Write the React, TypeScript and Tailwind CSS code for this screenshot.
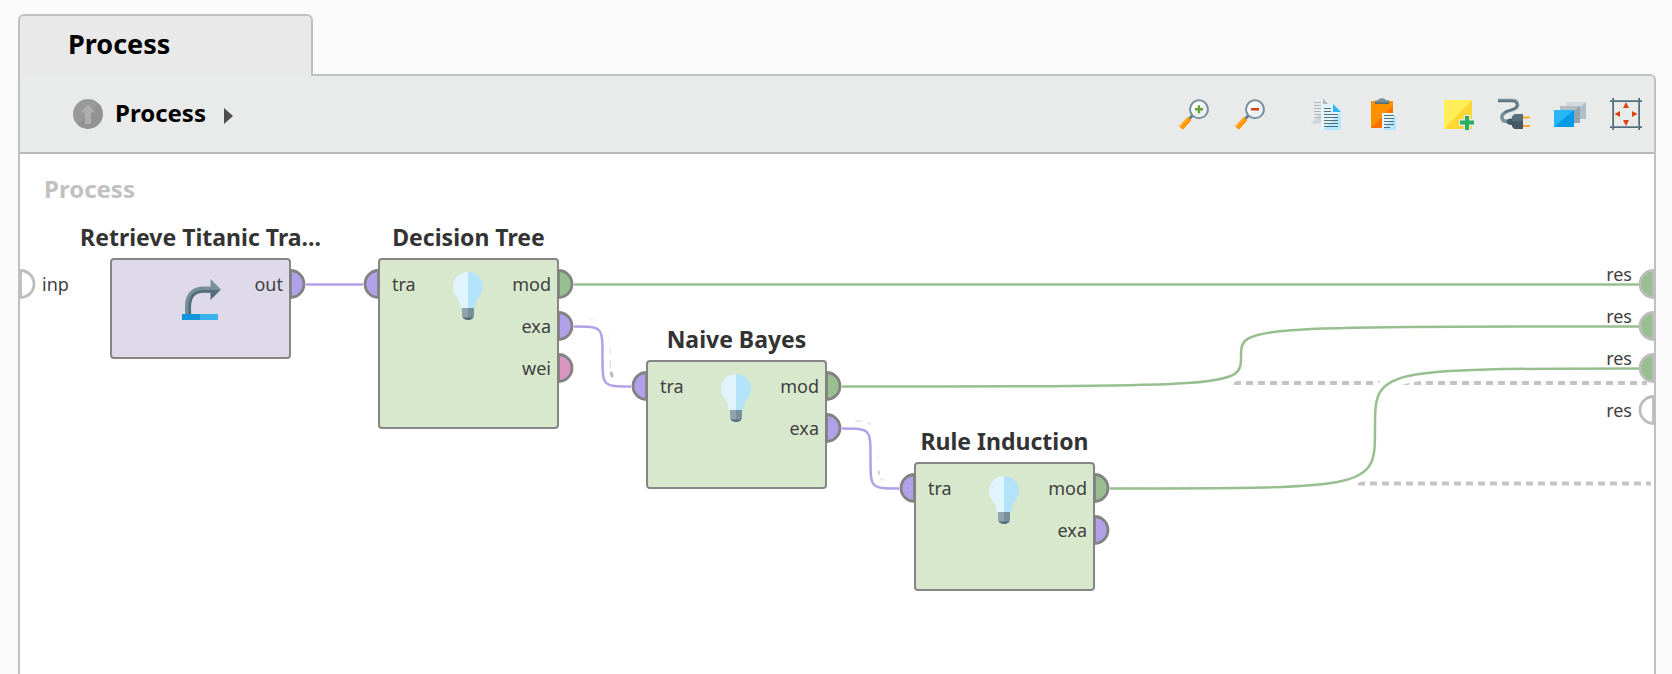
import { useLayoutEffect, useRef, useState, type ReactNode } from "react";

type PortKind = "data" | "model" | "weights" | "empty";

const PORT_FILL: Record<PortKind, string> = {
  data: "#b1a1e9",
  model: "#98bf8f",
  weights: "#d996c0",
  empty: "#ffffff",
};

type Port = { label: string; kind: PortKind };

type Operator = {
  name: string;
  place: string;
  tone: string;
  icon: ReactNode;
  inputs: Port[];
  outputs: Port[];
};

function HalfPort({ kind, side, stroke = "#828282" }: { kind: PortKind; side: "left" | "right"; stroke?: string }) {
  const d = side === "right" ? "M1.5 1.5 A13.5 13.5 0 0 1 1.5 28.5 Z" : "M15.5 1.5 A13.5 13.5 0 0 0 15.5 28.5 Z";
  return (
    <svg width="17" height="30" viewBox="0 0 17 30" className="block shrink-0" aria-hidden="true">
      <path d={d} fill={PORT_FILL[kind]} stroke={stroke} strokeWidth="2.8" />
    </svg>
  );
}

function Bulb() {
  return (
    <svg width="30" height="48" viewBox="0 0 30 48" aria-hidden="true">
      <path d="M15 0C6.500 0 0 6.500 0 15C0 24 7.500 25 7.500 36H15Z" fill="#e1f3fd" />
      <path d="M15 0C23.500 0 30 6.500 30 15C30 24 22.500 25 22.500 36H15Z" fill="#b3e3f8" />
      <path d="M9 36H15V48C12 48 9 46 9 43.500Z" fill="#90a4ae" />
      <path d="M15 36H21V43.500C21 46 18 48 15 48Z" fill="#78909c" />
      <path d="M9.500 45.500H20.500C19.500 47 17 48 15 48S10.500 47 9.500 45.500Z" fill="#546e7a" />
    </svg>
  );
}

function RetrieveIcon() {
  return (
    <svg width="40" height="48" viewBox="-2 -7 40 48" className="overflow-visible" aria-hidden="true">
      <path d="M6 35V27C6 16 12 10.500 22 10.500H30" fill="none" stroke="#78909c" strokeWidth="6" />
      <path d="M7.700 35V27C7.700 17 13 12.300 22 12.300H30" fill="none" stroke="#546e7a" strokeWidth="2.800" />
      <path d="M28.500 0L39 10.500H28.500Z" fill="#78909c" />
      <path d="M28.500 21L39 10.500H28.500Z" fill="#546e7a" />
      <path d="M0 35H18V41H0Z" fill="#1296db" />
      <path d="M18 35H36V41H18Z" fill="#38b3ee" />
    </svg>
  );
}

function Glyph({ children }: { children: ReactNode }) {
  return (
    <svg width="32" height="32" viewBox="0 0 32 32" className="block" aria-hidden="true">
      {children}
    </svg>
  );
}

function Lens() {
  return (
    <>
      <path d="M15.500 16.500L11 21" stroke="#607d8b" strokeWidth="3" />
      <path d="M11.500 20.500L3 30" stroke="#ff9800" strokeWidth="5" />
      <path d="M10.500 19L1.700 28.600" stroke="#ffb74d" strokeWidth="1.500" />
      <circle cx="21" cy="11.300" r="9" fill="#fff" />
      <path d="M27.400 5A9 9 0 0 1 14.600 17.700Z" fill="#eceff1" />
      <circle cx="21" cy="11.300" r="9" fill="none" stroke="#78909c" strokeWidth="2" />
    </>
  );
}

function ZoomInIcon() {
  return (
    <Glyph>
      <Lens />
      <path d="M17 11.300H25M21 7.300V15.300" stroke="#689f38" strokeWidth="2.400" />
    </Glyph>
  );
}

function ZoomOutIcon() {
  return (
    <Glyph>
      <Lens />
      <path d="M17 11.300H25" stroke="#d84315" strokeWidth="2.400" />
    </Glyph>
  );
}

function CopyIcon() {
  return (
    <Glyph>
      <path d="M1 .500H13L18 6V25.500H1Z" fill="#e8eaec" />
      <path d="M1 25.500L18 8V25.500Z" fill="#cfd5d9" />
      <path d="M13 .500L18 6H13Z" fill="#b0b8bb" />
      <path d="M4 4.500H11M4 7.500H11M4 10.500H11M4 13.500H11M4 16.500H11M4 19.500H11" stroke="#b0b8bb" />
      <path d="M11 6H23L31 14V32H11Z" fill="#e1f5fe" />
      <path d="M31 14V32H13Z" fill="#b3e5fc" />
      <path d="M23 6L31 14H23Z" fill="#29b6f6" />
      <path d="M14 10.500H21M14 13.500H21M14 16.500H28M14 19.500H28M14 22.500H28M14 25.500H28M14 28.500H28" stroke="#546e7a" strokeWidth="1.200" />
    </Glyph>
  );
}

function PasteIcon() {
  return (
    <Glyph>
      <path d="M5 3H27V30H5Z" fill="#ff9100" />
      <path d="M27 8V30H5Z" fill="#ff6f00" />
      <path d="M9 2.200H12C13 .600 14.500 .200 16 .200S19 .600 20 2.200H23V6H9Z" fill="#78909c" />
      <path d="M9 4.200H23V6H9Z" fill="#546e7a" />
      <path d="M16 15H30V32H16Z" fill="#e1f5fe" />
      <path d="M30 17V32H16.500Z" fill="#b3e5fc" />
      <path d="M18 17.500H28M18 20.500H28M18 23.500H28M18 26.500H28M18 29.500H24" stroke="#546e7a" strokeWidth="1.200" />
    </Glyph>
  );
}

function NoteIcon() {
  return (
    <Glyph>
      <path d="M2 2H30V31H2Z" fill="#ffee58" />
      <path d="M30 2V31H2Z" fill="#fdd835" />
      <path d="M25 17V32M17 24.500H32" stroke="#e8ebea" strokeWidth="6.500" />
      <path d="M25 18V32M18 24.500H32" stroke="#27ae60" strokeWidth="4" />
    </Glyph>
  );
}

function PlugIcon() {
  return (
    <Glyph>
      <path d="M0 2.500H14C19.500 2.500 20.500 6.500 19 9C17 12.500 10 12 6.500 14.800C1.500 18.500 4 24 10 23.500" fill="none" stroke="#78909c" strokeWidth="3.400" />
      <path d="M0 3.300H14C18.600 3.300 19.500 6.500 18.200 8.700C16 12 9.500 11.700 6.500 14.800" fill="none" stroke="#546e7a" strokeWidth="1.600" />
      <path d="M9 21.500L12 20.500H15V27H12L9 25.500Z" fill="#455a64" />
      <path d="M16.500 16H25V31H16.500L14 28.500V18.500Z" fill="#546e7a" />
      <path d="M14 23.500H25V31H16.500L14 28.500Z" fill="#455a64" />
      <path d="M25 19.500H32M25 28H32" stroke="#ffa726" strokeWidth="2.200" />
    </Glyph>
  );
}

function LayersIcon() {
  return (
    <Glyph>
      <path d="M12 4H32V21H12Z" fill="#cfd8dc" />
      <path d="M32 4V21H12Z" fill="#b0bec5" />
      <path d="M6 8H26V25H6Z" fill="#b0bec5" />
      <path d="M26 8V25H6Z" fill="#90a4ae" />
      <path d="M0 12H20V29H0Z" fill="#29b6f6" />
      <path d="M20 12V29H0Z" fill="#039be5" />
    </Glyph>
  );
}

function FitIcon() {
  return (
    <Glyph>
      <path d="M3 0V32M29 0V32M0 3H32M0 29H32" stroke="#78909c" strokeWidth="2" />
      <path d="M3.500 0V32M29.500 0V32M0 3.500H32M0 29.500H32" stroke="#546e7a" />
      <path d="M16 4L19 10H13ZM16 28L19 22H13ZM4.500 16L10 13V19ZM27.500 16L22 13V19Z" fill="#dd4215" />
    </Glyph>
  );
}

const TOOL_GROUPS = [
  [
    { label: "Zoom in", icon: <ZoomInIcon /> },
    { label: "Zoom out", icon: <ZoomOutIcon /> },
  ],
  [
    { label: "Copy", icon: <CopyIcon /> },
    { label: "Paste", icon: <PasteIcon /> },
  ],
  [
    { label: "Add note", icon: <NoteIcon /> },
    { label: "Connect ports", icon: <PlugIcon /> },
    { label: "Operator order", icon: <LayersIcon /> },
    { label: "Fit to window", icon: <FitIcon /> },
  ],
];

const OPERATORS: Operator[] = [
  {
    name: "Retrieve Titanic Tra...",
    place: "left-[90px] top-[104px] h-[101px]",
    tone: "bg-[#dedaea]",
    icon: <RetrieveIcon />,
    inputs: [],
    outputs: [{ label: "out", kind: "data" }],
  },
  {
    name: "Decision Tree",
    place: "left-[358px] top-[104px] h-[171px]",
    tone: "bg-[#d8e8cd]",
    icon: <Bulb />,
    inputs: [{ label: "tra", kind: "data" }],
    outputs: [
      { label: "mod", kind: "model" },
      { label: "exa", kind: "data" },
      { label: "wei", kind: "weights" },
    ],
  },
  {
    name: "Naive Bayes",
    place: "left-[626px] top-[206px] h-[129px]",
    tone: "bg-[#d8e8cd]",
    icon: <Bulb />,
    inputs: [{ label: "tra", kind: "data" }],
    outputs: [
      { label: "mod", kind: "model" },
      { label: "exa", kind: "data" },
    ],
  },
  {
    name: "Rule Induction",
    place: "left-[894px] top-[308px] h-[129px]",
    tone: "bg-[#d8e8cd]",
    icon: <Bulb />,
    inputs: [{ label: "tra", kind: "data" }],
    outputs: [
      { label: "mod", kind: "model" },
      { label: "exa", kind: "data" },
    ],
  },
];

function OperatorNode({ op }: { op: Operator }) {
  return (
    <section className={`absolute w-[181px] rounded-[4px] border-2 border-[#868686] ${op.place} ${op.tone}`}>
      <h2 className="absolute bottom-full left-1/2 -translate-x-1/2 whitespace-nowrap pb-[7px] text-[23px] font-bold leading-8 text-[#333]">
        {op.name}
      </h2>
      <div className="grid grid-cols-[68px_40px_1fr] pt-[3px]">
        <ul>
          {op.inputs.map((port) => (
            <li key={port.label} className="relative flex h-[42px] items-center pl-3">
              <span className="absolute right-full">
                <HalfPort kind={port.kind} side="left" />
              </span>
              {port.label}
            </li>
          ))}
        </ul>
        <div className="flex justify-center pt-[9px]">{op.icon}</div>
        <ul>
          {op.outputs.map((port) => (
            <li key={port.label} className="relative flex h-[42px] items-center justify-end pr-1.5">
              {port.label}
              <span className="absolute left-full">
                <HalfPort kind={port.kind} side="right" />
              </span>
            </li>
          ))}
        </ul>
      </div>
    </section>
  );
}

function wire(x1: number, y1: number, x2: number, y2: number) {
  const mx = (x1 + x2) / 2;
  const my = (y1 + y2) / 2;
  return `M${x1} ${y1}C${mx} ${y1} ${mx} ${y1} ${mx} ${my}C${mx} ${y2} ${mx} ${y2} ${x2} ${y2}`;
}

function Wires({ width }: { width: number }) {
  const end = width - 14;
  const links = [
    { d: wire(286, 130.5, 343, 130.5), color: "#b1a1e9" },
    { d: wire(554, 172.5, 611, 232.5), color: "#b1a1e9" },
    { d: wire(822, 274.5, 879, 334.5), color: "#b1a1e9" },
    { d: wire(554, 130.5, end, 130.5), color: "#98bf8f" },
    { d: wire(822, 232.5, end, 172.5), color: "#98bf8f" },
    { d: wire(1090, 334.5, end, 214.5), color: "#98bf8f" },
  ];
  return (
    <svg className="absolute inset-0 h-full w-full" aria-hidden="true">
      <g fill="none" stroke="#c4c4c4" strokeWidth="4" strokeDasharray="7 5">
        <path d={`M1214 229H${width - 7}`} />
        <path d={`M1338 329.500H${width - 3}`} />
      </g>
      <g fill="none" stroke="#9a9a9a" strokeLinecap="round" strokeWidth="2">
        <path d="M570 165.500L576 166" opacity=".1" />
        <path d="M589 181V188" opacity=".12" />
        <path d="M590 194V200" opacity=".2" />
        <path d="M590 207V213" opacity=".35" />
        <path d="M591 219L592 222" opacity=".7" strokeWidth="3" />
        <path d="M836 267L841 267.500M848 269L850 270" opacity=".25" />
        <path d="M858 301V305" opacity=".15" />
        <path d="M858.500 317L859 320" opacity=".45" />
        <path d="M861 325L863 326" opacity=".2" />
        <path d="M1103 327.500H1210" opacity=".12" strokeDasharray="5 8" />
      </g>
      {links.map((link) => (
        <g key={link.d} fill="none">
          <path d={link.d} stroke="#fff" strokeWidth="14" />
          <path d={link.d} stroke={link.color} strokeWidth="2.500" />
        </g>
      ))}
    </svg>
  );
}

const RESULTS: { kind: PortKind; raised: boolean }[] = [
  { kind: "model", raised: true },
  { kind: "model", raised: true },
  { kind: "model", raised: true },
  { kind: "empty", raised: false },
];

function Canvas() {
  const ref = useRef<HTMLDivElement>(null);
  const [width, setWidth] = useState(1634);

  useLayoutEffect(() => {
    const el = ref.current;
    if (!el) return;
    const update = () => setWidth(el.clientWidth);
    update();
    const observer = new ResizeObserver(update);
    observer.observe(el);
    return () => observer.disconnect();
  }, []);

  return (
    <main ref={ref} className="relative min-h-[480px] flex-1 overflow-hidden bg-white text-[18px] leading-6 text-[#404040]">
      <Wires width={width} />
      <p className="relative px-6 pt-[19px] text-[24px] font-bold leading-8 text-[#c1c1c1]">Process</p>
      <div className="absolute left-0 top-[109px] flex h-[42px] items-center gap-1.5">
        <span className="-ml-px">
          <HalfPort kind="empty" side="right" stroke="#bdbdbd" />
        </span>
        inp
      </div>
      {OPERATORS.map((op) => (
        <OperatorNode key={op.name} op={op} />
      ))}
      <ul className="absolute right-0 top-[109px]">
        {RESULTS.map((result, i) => (
          <li key={i} className="flex h-[42px] items-center justify-end gap-1.5">
            <span className={result.raised ? "pb-5" : ""}>res</span>
            <span className="-mr-px">
              <HalfPort kind={result.kind} side="left" stroke="#bdbdbd" />
            </span>
          </li>
        ))}
      </ul>
    </main>
  );
}

export default function App() {
  return (
    <div className="flex min-h-screen flex-col bg-[#fafafa] pl-[18px] pr-4 pt-[14px] font-['Noto_Sans','Open_Sans',sans-serif]">
      <div role="tablist" className="relative z-10 -mb-0.5 flex">
        <button
          type="button"
          role="tab"
          aria-selected="true"
          className="h-[62px] w-[295px] rounded-t-[6px] border-2 border-b-0 border-[#c0c0c0] bg-[#e9e9e9] pb-1 pl-12 text-left text-[27px] font-bold leading-8 text-black"
        >
          Process
        </button>
      </div>
      <div className="flex flex-1 flex-col overflow-hidden rounded-tr-[6px] border-2 border-b-0 border-[#c0c0c0]">
        <header className="flex h-[78px] items-center justify-between border-b-2 border-[#b9b9b9] bg-[#e8ebea] pl-[53px] pr-3">
          <nav className="flex items-center">
            <button type="button" aria-label="Go to parent process">
              <svg width="30" height="30" viewBox="0 0 30 30" className="block" aria-hidden="true">
                <circle cx="15" cy="15" r="15" fill="#999" />
                <path d="M25.600 4.400A15 15 0 0 1 4.400 25.600Z" fill="#929292" />
                <path d="M15 5.500L22.500 13.500H18V25H12V13.500H7.500Z" fill="#adadad" />
              </svg>
            </button>
            <a href="#process" className="ml-3 pb-0.5 text-[24px] font-bold leading-8 text-black">
              Process
            </a>
            <svg width="9" height="16" viewBox="0 0 9 16" className="ml-[18px] mt-1" aria-hidden="true">
              <path d="M0 0L9 8L0 16Z" fill="#4d4d4d" />
            </svg>
          </nav>
          <div className="flex gap-11">
            {TOOL_GROUPS.map((group, i) => (
              <div key={i} className="flex gap-6">
                {group.map((tool) => (
                  <button key={tool.label} type="button" aria-label={tool.label}>
                    {tool.icon}
                  </button>
                ))}
              </div>
            ))}
          </div>
        </header>
        <Canvas />
      </div>
    </div>
  );
}
